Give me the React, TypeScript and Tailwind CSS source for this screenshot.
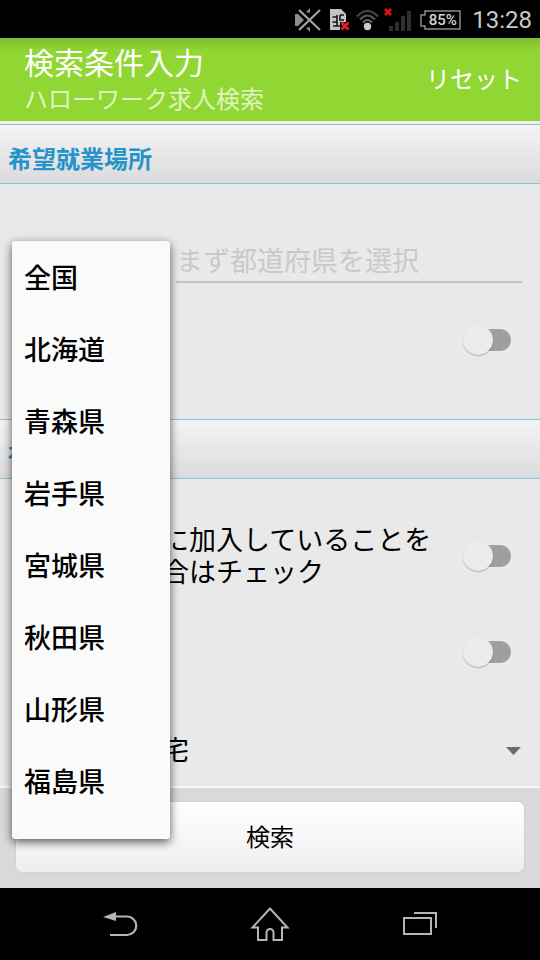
import { useState } from 'react'

const prefectures = ['全国', '北海道', '青森県', '岩手県', '宮城県', '秋田県', '山形県', '福島県']

function StatusBar() {
  return (
    <div className="flex h-[38px] items-center justify-end bg-black pr-2 pt-px">
      {/* Muted */}
      <svg width="27" height="24" viewBox="0 0 27 24" className="mr-2">
        <path d="M0 6h3l6 6-6 6H0z" fill="#8c8c8c" />
        <path d="M11 4l4-4v5zM11 20l4 4v-5z" fill="#8c8c8c" />
        <path d="M4 2l21 20M25 2L4 22" stroke="#000" strokeWidth="4" fill="none" />
        <path d="M4 2l21 20M25 2L4 22" stroke="#a3a3a3" strokeWidth="2.200" fill="none" />
      </svg>
      {/* SIM missing */}
      <svg width="20" height="22" viewBox="0 0 20 22" className="mr-[6px]">
        <path d="M0 0h11l5 5v16H0z" fill="#c4c4c4" />
        <path d="M2.500 8H7M2.500 13H7M7 6v11M3 17h8M10 6h4M10 6v5h4" stroke="#161616" strokeWidth="1.600" fill="none" />
        <path d="M10 13h10v9H10z" fill="#000" />
        <path d="M11.500 13.500l7 7M18.500 13.500l-7 7" stroke="#e02020" strokeWidth="3" />
      </svg>
      {/* Wifi */}
      <svg width="23" height="22" viewBox="0 0 23 22" className="mr-[5px]">
        <g fill="none" strokeWidth="2.200">
          <path d="M1 7.500Q11.500-3.500 22 7.500" stroke="#484848" />
          <path d="M4 10.500Q11.500 2.500 19 10.500" stroke="#585858" />
          <path d="M7 13.500Q11.500 8.500 16 13.500" stroke="#6c6c6c" />
        </g>
        <circle cx="11.500" cy="17.500" r="3.700" fill="#c9c9c9" />
      </svg>
      {/* No signal */}
      <svg width="28" height="25" viewBox="0 0 28 25" className="mr-2">
        <path d="M5 19h4v5H5zM11 15h4v9h-4zM17 9h4v15h-4zM23 4h4v20h-4z" fill="#2f2f2f" />
        <path d="M1 2l6 6M7 2L1 8" stroke="#e01010" strokeWidth="2.800" />
      </svg>
      {/* Battery */}
      <div className="relative mr-[11px] flex h-5 w-[41px] items-center justify-center">
        <svg width="41" height="20" viewBox="0 0 41 20" className="absolute inset-0">
          <path d="M5 1h35v18H5v-3H1V5h4z" stroke="#8a8a8a" strokeWidth="1.500" fill="none" />
        </svg>
        <span className="pl-1 text-[15px] font-medium leading-5 text-[#d4d4d4]">85%</span>
      </div>
      <span className="text-[24px] leading-8 text-[#c8c8c8]">13:28</span>
    </div>
  )
}

function SectionHeader({ title }: { title: string }) {
  return (
    <h2 className="flex h-[60px] items-center border-y border-[#8dbfda] bg-linear-to-b from-[#f4f4f4] to-[#dbdbdb] px-2 pt-3 text-[24px] font-bold leading-8 text-[#2693cb]">
      {title}
    </h2>
  )
}

function Switch({ id, label }: { id: string; label?: string }) {
  const [checked, setChecked] = useState(false)

  return (
    <input
      id={id}
      type="checkbox"
      role="switch"
      aria-label={label}
      checked={checked}
      onChange={(e) => setChecked(e.target.checked)}
      className="relative h-[30px] w-12 shrink-0 appearance-none before:absolute before:inset-y-1 before:left-1 before:right-0 before:rounded-full before:bg-[#9f9f9f] after:absolute after:left-0 after:top-0 after:size-[30px] after:rounded-full after:bg-[#ececec] after:shadow-[0_1px_1px_rgba(0,0,0,0.25)] checked:before:bg-[#91d733] checked:after:left-[18px]"
    />
  )
}

export default function App() {
  const [prefecture, setPrefecture] = useState('全国')
  const [menuOpen, setMenuOpen] = useState(true)

  const handleSelect = (name: string) => {
    setPrefecture(name)
    setMenuOpen(false)
  }

  return (
    <div className="flex min-h-screen flex-col bg-[#e9e9e9] font-[Roboto,'Noto_Sans_CJK_JP',sans-serif] text-black">
      <StatusBar />

      <header className="flex h-[86px] items-center justify-between border-b-[3px] border-[#eef0ee] bg-linear-to-b from-[#83bd31] to-[#91d733] to-[14px] pl-6 pr-[18px] text-white">
        <div className="pt-1">
          <h1 className="text-[30px] leading-9">検索条件入力</h1>
          <p className="text-[24px] leading-9 text-[#e0f4c4]">ハローワーク求人検索</p>
        </div>
        <button type="button" className="text-[24px] leading-8">
          リセット
        </button>
      </header>

      <main className="flex flex-1 flex-col">
        <SectionHeader title="希望就業場所" />
        <section className="relative pb-[23px] pt-[50px]">
          <div className="flex items-center gap-3 pl-4 pr-[18px]">
            <button
              type="button"
              aria-label="都道府県"
              aria-haspopup="listbox"
              aria-expanded={menuOpen}
              onClick={() => setMenuOpen(true)}
              className="h-12 w-[148px] pl-[11px] text-left text-[27px]"
            >
              {!menuOpen && prefecture}
            </button>
            <input
              type="text"
              aria-label="市区町村"
              placeholder="まず都道府県を選択"
              className="h-[49px] min-w-0 flex-1 border-b-2 border-[#c3c3c3] bg-transparent pt-2 text-[27px] outline-none placeholder:text-[#c9c9c9]"
            />
          </div>
          <div className="flex h-[113px] items-center justify-end pr-[29px]">
            <Switch id="nearby" label="近隣を含む" />
          </div>

          {menuOpen && (
            <ul
              role="listbox"
              aria-label="都道府県"
              className="absolute left-3 top-[57px] z-10 w-[158px] rounded-[3px] bg-[#fafafa] pb-5 pt-[2px] shadow-[0_3px_10px_rgba(0,0,0,0.65)]"
            >
              {prefectures.map((name) => (
                <li key={name} role="option" aria-selected={name === prefecture}>
                  <button
                    type="button"
                    onClick={() => handleSelect(name)}
                    className="flex h-[72px] w-full items-center pl-3 text-[27px] font-medium"
                  >
                    {name}
                  </button>
                </li>
              ))}
            </ul>
          )}
        </section>

        <SectionHeader title="福利厚生" />
        <section className="flex-1 pl-[27px] pt-[29px]">
          <div className="flex h-24 items-center justify-between pr-[29px]">
            <label htmlFor="insurance" className="pt-[2px] text-[27px] leading-8">
              社会保険等に加入していることを
              <br />
              希望する場合はチェック
            </label>
            <Switch id="insurance" />
          </div>
          <div className="flex h-24 items-center justify-end pr-[29px]">
            <Switch id="childcare" label="託児所" />
          </div>
          <div className="relative flex h-[86px] items-center pr-[19px] pt-4">
            <select
              aria-label="入居可能住宅"
              className="h-12 w-full appearance-none bg-transparent text-[27px] outline-none"
            >
              <option>入居可能住宅</option>
            </select>
            <svg width="15" height="8" viewBox="0 0 15 8" className="pointer-events-none absolute right-[19px]">
              <path d="M0 0h15L7.500 8z" fill="#6b6b6b" />
            </svg>
          </div>
        </section>
      </main>

      <footer className="border-t-2 border-[#f8f8f8] bg-[#d9d9d9] px-4 pb-4 pt-[14px]">
        <button
          type="button"
          className="h-[70px] w-full rounded-md bg-linear-to-b from-white to-[#eeeeee] pt-[2px] text-[24px] shadow-[0_0_1px_rgba(0,0,0,0.3)]"
        >
          検索
        </button>
      </footer>

      <nav className="flex h-[72px] items-center justify-center gap-[112px] bg-black pt-[2px]">
        <button type="button" aria-label="戻る">
          <svg width="36" height="36" viewBox="0 0 36 36">
            <path d="M1 10l13-5v9z" fill="#b5b5b5" />
            <path d="M13 9.500h12a9.200 9.200 0 0 1 0 18.500H8" stroke="#b5b5b5" strokeWidth="2.200" fill="none" />
          </svg>
        </button>
        <button type="button" aria-label="ホーム">
          <svg width="40" height="36" viewBox="0 0 40 36">
            <path
              d="M20 1.500L2.500 20.500H8V33h8.500v-7.500a3.500 3.500 0 0 1 7 0V33H32V20.500h5.500z"
              stroke="#b5b5b5"
              strokeWidth="2"
              fill="none"
            />
          </svg>
        </button>
        <button type="button" aria-label="履歴">
          <svg width="36" height="36" viewBox="0 0 36 36">
            <path d="M2 11h27v16H2zM12 6h22v15" stroke="#b5b5b5" strokeWidth="2" fill="none" />
          </svg>
        </button>
      </nav>
    </div>
  )
}
